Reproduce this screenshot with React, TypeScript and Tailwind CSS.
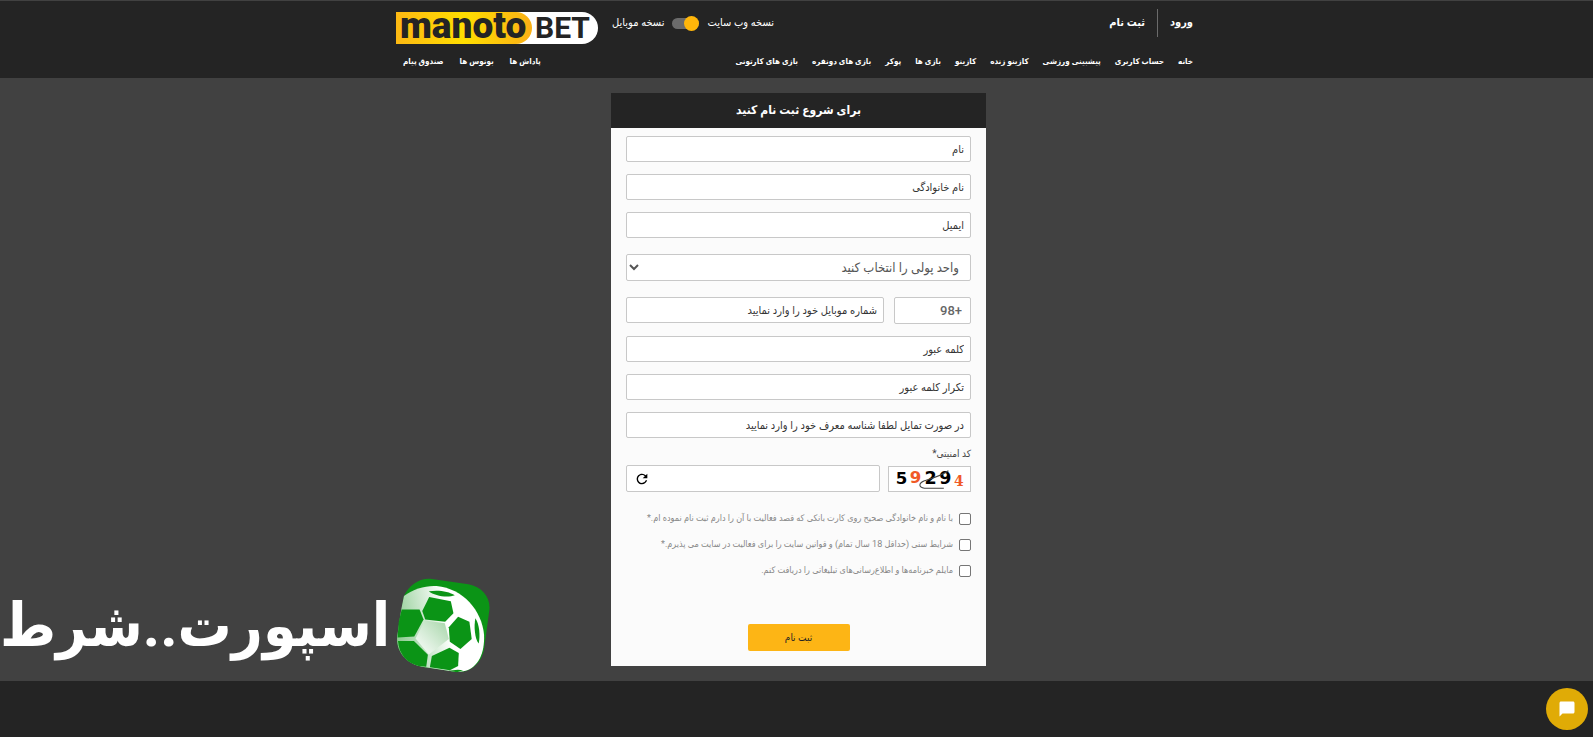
import { MdChatBubble, MdRefresh } from 'react-icons/md'

const mainLinks = [
  'خانه',
  'حساب کاربری',
  'پیشبینی ورزشی',
  'کازینو زنده',
  'کازینو',
  'بازی ها',
  'پوکر',
  'بازی های دونفره',
  'بازی های کارتونی',
]

const accountLinks = ['پاداش ها', 'بونوس ها', 'صندوق پیام']

const agreements = [
  'با نام و نام خانوادگی صحیح روی کارت بانکی که قصد فعالیت با آن را دارم ثبت نام نموده ام.*',
  'شرایط سنی (حداقل 18 سال تمام) و قوانین سایت را برای فعالیت در سایت می پذیرم.*',
  'مایلم خبرنامه‌ها و اطلاع‌رسانی‌های تبلیغاتی را دریافت کنم.',
]

function Logo() {
  return (
    <svg
      width="202"
      height="32"
      viewBox="0 0 202 32"
      direction="ltr"
      role="img"
      aria-label="manoto BET"
      className="overflow-visible"
    >
      <defs>
        <linearGradient id="logo-gold" x1="0" x2="1" y1="0" y2="0">
          <stop offset="0" stopColor="#fdb913" />
          <stop offset="0.5" stopColor="#ffde00" />
          <stop offset="1" stopColor="#fbb016" />
        </linearGradient>
      </defs>
      <path d="M100 0h86a16 16 0 0 1 0 32h-86z" fill="#fff" />
      <path d="M0 0h120a16 16 0 0 1 0 32H0z" fill="url(#logo-gold)" />
      <text x="4" y="26" fontFamily="Roboto, sans-serif" fontWeight="900" fontSize="37" fill="#242424">
        manoto
      </text>
      <text x="139" y="26" fontFamily="Roboto, sans-serif" fontWeight="700" fontSize="30" fill="#242424">
        BET
      </text>
    </svg>
  )
}

function VersionSwitch() {
  return (
    <div className="flex items-center gap-2 text-[11px] text-white">
      <label htmlFor="version">نسخه وب سایت</label>
      <input
        id="version"
        type="checkbox"
        role="switch"
        defaultChecked
        dir="ltr"
        className="relative h-[11px] w-[27px] appearance-none rounded-full bg-[#6b6b6b] before:absolute before:-top-0.5 before:left-0 before:size-[15px] before:rounded-full before:bg-[#ffb60a] checked:before:left-3"
      />
      <label htmlFor="version">نسخه موبایل</label>
    </div>
  )
}

function Header() {
  return (
    <header className="h-[78px] border-t border-[#414141] bg-[#242424] pr-5 pl-4 font-bold text-white">
      <div className="mx-auto flex max-w-[797px] flex-col">
        <div className="flex h-[44px] items-center justify-between">
          <div className="flex items-center text-[11px]">
            <a href="#login" className="border-l border-[#6b6b6b] py-1.5 pl-3">
              ورود
            </a>
            <a href="#register" className="py-1.5 pr-3">
              ثبت نام
            </a>
          </div>
          <div className="flex items-center gap-3.5 font-normal">
            <VersionSwitch />
            <a href="#home" className="pt-2.5">
              <Logo />
            </a>
          </div>
        </div>
        <div className="flex h-8 items-center justify-between pt-0.5 text-[8px]">
          <nav className="flex gap-3.5">
            {mainLinks.map((link) => (
              <a key={link} href="#menu">
                {link}
              </a>
            ))}
          </nav>
          <nav className="flex gap-4 pl-[7px]">
            {accountLinks.map((link) => (
              <a key={link} href="#account">
                {link}
              </a>
            ))}
          </nav>
        </div>
      </div>
    </header>
  )
}

interface FieldProps {
  label: string
  type?: string
}

function Field({ label, type = 'text' }: FieldProps) {
  return (
    <input
      type={type}
      dir="rtl"
      aria-label={label}
      placeholder={label}
      className="h-[26px] w-full min-w-0 rounded-xs border border-[#c8c8c8] bg-white px-1.5 text-[11px] font-medium placeholder:text-[#333]"
    />
  )
}

function Captcha() {
  return (
    <svg
      width="83"
      height="26"
      viewBox="0 0 83 26"
      direction="ltr"
      role="img"
      aria-label="59294"
      className="shrink-0 border border-[#c8c8c8] bg-white"
    >
      <g fontFamily="'DejaVu Sans', sans-serif" fontWeight="700" fontSize="18">
        <text x="5" y="18">5</text>
        <text x="20" y="17" fill="#f05a28">9</text>
        <text x="36" y="18" fontSize="19">2</text>
        <text x="52" y="18" fontSize="19">9</text>
        <text x="68" y="21" fontSize="15" fontFamily="'DejaVu Serif', serif" fill="#f05a28">4</text>
      </g>
      <path d="M62 4C55 9 45 12 36 15c-7 3-6 7 0 8h21" fill="none" stroke="#444" strokeWidth="1.2" />
    </svg>
  )
}

function RegisterForm() {
  return (
    <section className="w-full max-w-[375px] bg-[#fbfbfb]">
      <h1 className="flex h-[35px] items-center justify-center bg-[#242424] pb-0.5 text-xs font-bold text-white">
        برای شروع ثبت نام کنید
      </h1>
      <form className="flex flex-col px-[15px] pt-2 pb-[15px]">
        <div className="flex flex-col gap-3">
          <Field label="نام" />
          <Field label="نام خانوادگی" />
          <Field label="ایمیل" type="email" />
        </div>
        <div className="relative my-4">
          <select
            aria-label="واحد پولی"
            className="h-[27px] w-full appearance-none rounded-xs border border-[#c8c8c8] bg-white px-[11px] text-[13px] font-medium text-[#555]"
          >
            <option>واحد پولی را انتخاب کنید</option>
          </select>
          <svg
            viewBox="0 0 10 7"
            className="pointer-events-none absolute top-2.5 left-[3px] h-[7px] w-2.5 fill-none stroke-[#555] stroke-2"
          >
            <path d="M1 1l4 4 4-4" />
          </svg>
        </div>
        <div className="flex flex-col gap-3">
          <div className="flex items-start gap-2.5">
            <input
              aria-label="کد کشور"
              defaultValue="98+"
              dir="ltr"
              className="h-[27px] w-[77px] shrink-0 rounded-xs border border-[#c8c8c8] bg-white px-2 text-right text-[13px] font-medium text-[#666]"
            />
            <Field label="شماره موبایل خود را وارد نمایید" type="tel" />
          </div>
          <Field label="کلمه عبور" type="password" />
          <Field label="تکرار کلمه عبور" type="password" />
          <Field label="در صورت تمایل لطفا شناسه معرف خود را وارد نمایید" />
        </div>
        <label htmlFor="captcha" className="flex h-[27px] items-center pt-1 text-[10px] text-[#444]">
          کد امنیتی*
        </label>
        <div className="flex items-end gap-2">
          <Captcha />
          <div className="relative flex-1">
            <input
              id="captcha"
              className="block h-[27px] w-full rounded-xs border border-[#c8c8c8] bg-white pr-1.5 pl-8 text-[11px]"
            />
            <button type="button" aria-label="کد جدید" className="absolute top-1.5 left-2">
              <MdRefresh className="size-4" />
            </button>
          </div>
        </div>
        <div className="flex flex-col gap-[13px] pt-5 pb-[47px]">
          {agreements.map((text) => (
            <label
              key={text}
              className="flex h-[13px] items-center gap-1.5 text-[9px] whitespace-nowrap text-[#888]"
            >
              <input
                type="checkbox"
                className="size-3 shrink-0 appearance-none rounded-xs border border-[#767676] bg-white"
              />
              {text}
            </label>
          ))}
        </div>
        <button type="submit" className="h-[27px] w-[102px] self-center rounded-xs bg-[#fdb515] text-[10px] text-[#242424]">
          ثبت نام
        </button>
      </form>
    </section>
  )
}

function FootballMark() {
  return (
    <svg viewBox="1198 52 284 286" className="size-[95px] shrink-0">
      <defs>
        <linearGradient id="ball" x1="0" x2="1" y1="0.6" y2="0.4">
          <stop offset="0" stopColor="#8ccb90" />
          <stop offset="0.6" stopColor="#fff" />
        </linearGradient>
        <linearGradient id="patch" x1="0" x2="1" y1="1" y2="0">
          <stop offset="0" stopColor="#fff" />
          <stop offset="1" stopColor="#a5d5a8" />
        </linearGradient>
      </defs>
      <path
        d="M1221 106C1235 76 1265 52 1300 54l115 17c42 7 68 42 63 78l-16 118c-8 42-40 70-82 68l-105-16c-50-10-80-50-74-94z"
        fill="#0b9416"
      />
      <path
        d="M1221 106c28-22 66-32 98-30 81 8 136 74 143 146 3 63-22 103-62 111l-20 2-105-16c-50-10-80-50-74-94l12-80z"
        fill="url(#ball)"
      />
      <path d="M1284 180l60 8 12 48-60 46-40-48z" fill="url(#patch)" />
      <g fill="#0b9416">
        <path d="M1297 109l65 13 8 36-25 26-60-7-9-26z" />
        <path d="M1214 147l54 0 12 30-28 51-50 3 3-45z" />
        <path d="M1384 169l34 15 7 52-34 30-32-22-3-44z" />
        <path d="M1203 242l48 0 42 41-5 36-23-2c-35-8-59-35-62-75z" />
        <path d="M1358 262l28 16-2 39-25 13-60-9 6-34z" />
        <path d="M1296 92c28-5 60 0 78 12-22 9-62 2-78-12z" />
        <path d="M1436 173c12 18 15 52 10 76-12-14-15-52-10-76z" />
        <path d="M1355 331l28-3 16 2-18 6z" />
      </g>
    </svg>
  )
}

export default function App() {
  return (
    <div
      dir="rtl"
      className="flex min-h-screen flex-col overflow-hidden bg-[#414141] font-[Roboto,'DejaVu_Sans_Condensed','DejaVu_Sans',sans-serif]"
    >
      <Header />
      <main className="relative flex flex-1 flex-col items-center py-[15px] pl-1">
        <RegisterForm />
        <a
          href="#sport"
          className="absolute bottom-2 left-0 flex items-center gap-1.5 text-[60px] leading-none font-bold whitespace-nowrap text-white"
        >
          <FootballMark />
          <span>اسپورت..شرط</span>
        </a>
      </main>
      <footer className="h-14 bg-[#242424]" />
      <button
        type="button"
        aria-label="گفتگو"
        className="fixed right-[5px] bottom-[7px] flex size-[42px] items-center justify-center rounded-full bg-[#e0ab06] text-white"
      >
        <MdChatBubble className="size-[18px]" />
      </button>
    </div>
  )
}
